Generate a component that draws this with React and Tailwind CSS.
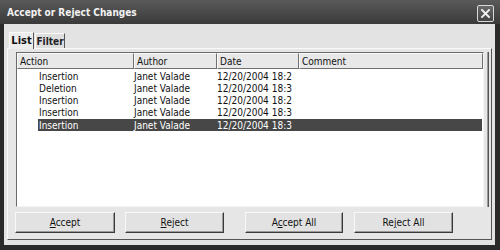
const rows = [
  { action: "Insertion", author: "Janet Valade", date: "12/20/2004 18:2" },
  { action: "Deletion", author: "Janet Valade", date: "12/20/2004 18:3" },
  { action: "Insertion", author: "Janet Valade", date: "12/20/2004 18:2" },
  { action: "Insertion", author: "Janet Valade", date: "12/20/2004 18:3" },
  { action: "Insertion", author: "Janet Valade", date: "12/20/2004 18:3", selected: true },
];

const Btn = ({ className, children }) => (
  <button className={`h-[21px] bg-[#e2e2e2] border border-t-[#f8f8f8] border-l-[#f8f8f8] border-r-[#3a3a3a] border-b-[#3a3a3a] shadow-[inset_-1px_-1px_0_#9a9a9a] text-[10px] text-[#111] ${className}`}>
    {children}
  </button>
);

export default function App() {
  return (
    <div className="w-[500px] h-[250px] bg-[#2a2a2a] flex flex-col font-['DejaVu_Sans_Condensed','Liberation_Sans',sans-serif] [font-stretch:condensed] overflow-hidden">
      <div className="h-[24px] shrink-0 flex items-center justify-between pl-[7px] pr-[6px] bg-gradient-to-b from-[#5a5a5a] to-[#3a3a3a]">
        <span className="text-[10px] font-bold text-[#f2f2f2] scale-y-110">Accept or Reject Changes</span>
        <div className="w-[17px] h-[17px] rounded-[2px] border border-[#d8d8d8] bg-gradient-to-b from-[#6a6a6a] to-[#444] flex items-center justify-center mt-[3px]">
          <svg width="11" height="11" viewBox="0 0 11 11">
            <path d="M2 2 L9 9 M9 2 L2 9" stroke="#f4f4f4" strokeWidth="1.8" strokeLinecap="square" />
          </svg>
        </div>
      </div>
      <div className="flex-1 ml-[4px] mr-[5px] mb-[5px] bg-[#e3e3e3] flex flex-col pl-[3px] pr-[3px] pt-[8px] pb-[5px]">
        <div className="flex items-end pl-[2px] h-[16px] shrink-0">
          <div className="h-[17px] w-[25px] bg-[#ececec] border border-b-0 border-t-[#fafafa] border-l-[#fafafa] border-r-[#555] text-[11px] font-bold text-[#111] flex items-center justify-center relative top-[1px] z-10">List</div>
          <div className="h-[15px] w-[30px] ml-[1px] bg-[#dedede] border border-b-0 border-t-[#fafafa] border-l-[#fafafa] border-r-[#555] text-[10px] font-bold text-[#222] flex items-center justify-center">Filter</div>
        </div>
        <div className="flex-1 border border-t-[#fafafa] border-l-[#fafafa] border-r-[#555] border-b-[#555] bg-[#e6e6e6] flex flex-col pl-[8px] pr-[3px] pt-[3px]">
          <div className="flex h-[155px] shrink-0">
            <div className="w-[468px] bg-white border border-t-[#6a6a6a] border-l-[#6a6a6a] border-r-[#f4f4f4] border-b-[#f4f4f4] flex flex-col">
              <div className="flex h-[16px] shrink-0 text-[10px] text-[#111]">
                {[
                  ["Action", "w-[117px]"],
                  ["Author", "w-[83px]"],
                  ["Date", "w-[82px]"],
                  ["Comment", "w-[184px]"],
                ].map(([t, w]) => (
                  <div key={t} className={`${w} h-full bg-[#e8e8e8] border border-t-[#fafafa] border-l-[#fafafa] border-r-[#707070] border-b-[#707070] flex items-center pl-[2px]`}>
                    {t}
                  </div>
                ))}
              </div>
              <div className="pt-[1px]">
                {rows.map((r, i) => (
                  <div key={i} className={`flex h-[12.25px] items-center text-[10px] ml-[21px] mr-[1px] ${r.selected ? "bg-[#474747] text-white" : "text-[#111]"}`}>
                    <span className="w-[96px] pl-[1px]">{r.action}</span>
                    <span className="w-[83px]">{r.author}</span>
                    <span>{r.date}</span>
                  </div>
                ))}
              </div>
            </div>
            <div className="w-[8px] ml-[3px] border-l border-r border-l-[#9a9a9a] border-r-[#555] bg-[#e6e6e6]" />
          </div>
          <div className="flex items-center mt-[5px]">
            <Btn className="w-[100px] -ml-[1px]"><span className="underline">A</span>ccept</Btn>
            <Btn className="w-[99px] ml-[10px]"><span className="underline">R</span>eject</Btn>
            <Btn className="w-[98px] ml-[21px]">A<span className="underline">c</span>cept All</Btn>
            <Btn className="w-[99px] ml-[11px]">Re<span className="underline">j</span>ect All</Btn>
          </div>
        </div>
      </div>
    </div>
  );
}
